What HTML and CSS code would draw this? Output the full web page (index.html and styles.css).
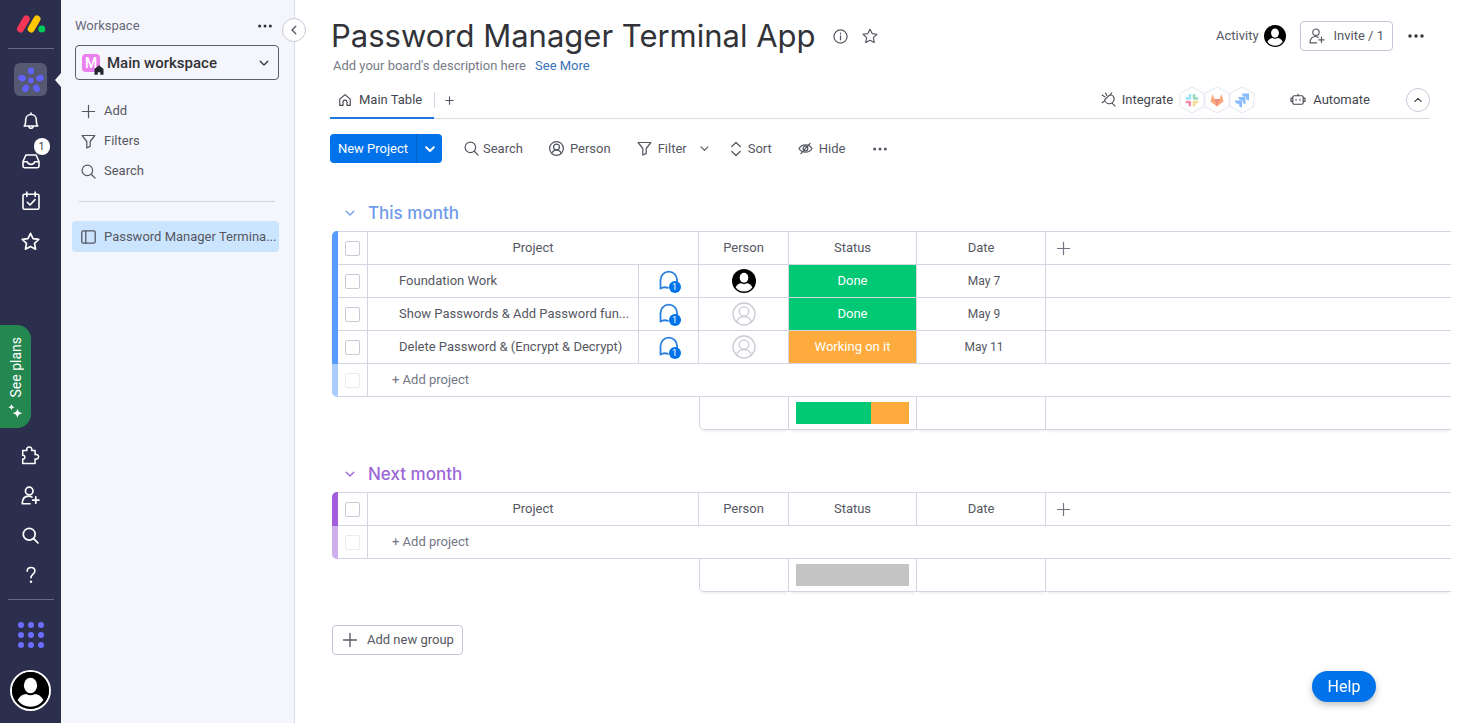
FILE: index.html
```html
<!DOCTYPE html>
<html lang="en">
<head>
<meta charset="utf-8">
<meta name="viewport" content="width=device-width, initial-scale=1">
<title>Password Manager Terminal App</title>
<link rel="stylesheet" href="styles.css">
</head>
<body>
<svg class="sprite" aria-hidden="true">
  <symbol id="i-chevron" viewBox="0 0 12 12"><path d="M2.200 4.200 6 8l3.800-3.800"/></symbol>
  <symbol id="i-plus" viewBox="0 0 16 16"><path d="M8 1.500v13M1.500 8h13"/></symbol>
  <symbol id="i-search" viewBox="0 0 16 16"><circle cx="6.800" cy="6.800" r="5.600"/><path d="m10.900 10.900 4.100 4.100"/></symbol>
  <symbol id="i-filter" viewBox="0 0 16 16"><path d="M1.200 1.600h13.600L9.800 8v5.200L6.200 15V8z"/></symbol>
  <symbol id="i-star" viewBox="0 0 18 18"><path d="m9 1.300 2.400 5 5.400.7-4 3.800 1 5.500L9 13.700l-4.800 2.600 1-5.500-4-3.800 5.400-.7z"/></symbol>
  <symbol id="i-invite" viewBox="0 0 18 18"><circle cx="7.800" cy="4.700" r="3.600"/><path d="M8.500 16.800H1.200c0-4.600 2.400-7.200 6-7.200 1.200 0 2.300.3 3.200.9M14 10.300v6M11 13.300h6"/></symbol>
  <symbol id="i-dots" viewBox="0 0 18 6"><g fill="currentColor" stroke="none"><circle cx="3" cy="3" r="1.700"/><circle cx="9" cy="3" r="1.700"/><circle cx="15" cy="3" r="1.700"/></g></symbol>
  <symbol id="i-person" viewBox="0 0 24 24"><circle cx="12" cy="12" r="11"/><circle cx="12" cy="9.500" r="4.700"/><path d="M4.500 20c1-3.300 3.800-5.300 7.500-5.300s6.500 2 7.500 5.300"/></symbol>
  <symbol id="i-avatar" viewBox="0 0 24 24"><circle cx="12" cy="12" r="12" fill="#000" stroke="none"/><ellipse cx="12" cy="8.800" rx="4.300" ry="5" fill="#fff" stroke="none"/><path d="M3.600 18.200c1.600-2.600 3.300-3.800 5.600-3.900 1.700 1.100 3.900 1.100 5.600 0 2.300.1 4 1.300 5.600 3.900A10.400 10.400 0 0 1 12 22.600a10.400 10.400 0 0 1-8.400-4.400z" fill="#fff" stroke="none"/></symbol>
  <symbol id="i-home" viewBox="0 0 16 16"><path d="M2 7 8 1.800 14 7v7.200h-3.700v-3.700a2.300 2.300 0 0 0-4.600 0v3.700H2z"/></symbol>
  <symbol id="i-chat" viewBox="0 0 22 22"><path d="M2.500 18.600V10a8.300 8.300 0 1 1 16.600 0v2.500M2.500 18.600c2.300-1.700 4.500-1.700 7.500-.8"/></symbol>
</svg>

<div class="app">
  <nav class="rail" aria-label="Main">
    <a class="rail-logo" href="#" aria-label="Home">
      <svg width="30" height="20" viewBox="0 0 30 20"><path d="m4.500 15 5.800-10" stroke="#f63655" stroke-width="7"/><path d="m15.200 15 5.800-10" stroke="#ffc800" stroke-width="7"/><circle cx="25.800" cy="15" r="3.500" fill="#00ca59" stroke="none"/></svg>
    </a>
    <a class="rail-active" href="#" aria-label="Work management">
      <svg width="26" height="26" viewBox="0 0 26 26"><g stroke="#6161ff" stroke-width="6"><path d="M13 3.500v.8M22.700 10.900l-1.500.5M18.900 22l-.9-1.300M7.100 22l.9-1.300M3.300 10.900l1.500.5"/></g><circle cx="13" cy="13.500" r="2.800" fill="#6161ff" stroke="none"/></svg>
    </a>
    <button class="rail-item" aria-label="Notifications"><svg width="18" height="18" viewBox="0 0 18 18"><path d="M2.200 14h13.600c-1.300-1.300-1.500-2.800-1.500-6.300 0-3-2.200-5.200-5.300-5.200S3.700 4.700 3.700 7.700c0 3.500-.2 5-1.500 6.300zM9 2.500V1M7 14.300a2 2 0 0 0 4 0"/></svg></button>
    <button class="rail-item" aria-label="Inbox"><svg width="20" height="18" viewBox="0 0 20 18"><path d="M2 9.500 4.900 3h10.200L18 9.500V14a1.800 1.800 0 0 1-1.800 1.800H3.800A1.800 1.800 0 0 1 2 14zM2.200 9.700h4.100c.7 3.600 6.700 3.600 7.400 0h4.100"/></svg><span class="rail-badge">1</span></button>
    <button class="rail-item" aria-label="My work"><svg width="20" height="20" viewBox="0 0 20 20"><rect x="2" y="3.200" width="16" height="15" rx="1.500"/><path d="M5.800 1v4.500M14.200 1v4.500M6.300 11.300 9 14l5-5.400"/></svg></button>
    <button class="rail-item" aria-label="Favorites"><svg width="19" height="19"><use href="#i-star"/></svg></button>
    <button class="plans">
      <span>See plans</span>
      <svg width="16" height="16" viewBox="0 0 16 16"><g fill="#fff" stroke="none"><path d="M9.500 4.500c.7 3 1.500 3.800 5 4.700-3.500.9-4.300 1.700-5 4.700-.7-3-1.500-3.800-5-4.700 3.500-.9 4.300-1.700 5-4.700z"/><path d="M3.500 0c.4 2 1 2.600 3.200 3.200-2.200.6-2.800 1.200-3.200 3.200-.4-2-1-2.600-3.200-3.200C2.500 2.600 3.100 2 3.500 0z"/></g></svg>
    </button>
    <div class="rail-bottom">
      <button class="rail-item" aria-label="Apps"><svg width="19" height="19" viewBox="0 0 20 20"><path d="M1.800 4.700h4.400c-.7-2 .5-3.700 2.500-3.700s3.200 1.700 2.500 3.700h3.600v4.500c2-.7 3.700.5 3.700 2.200s-1.700 2.900-3.700 2.200v4.700h-13v-4.600c3 .5 3-4.200 0-3.900z"/></svg></button>
      <button class="rail-item" aria-label="Invite members"><svg width="19" height="19"><use href="#i-invite"/></svg></button>
      <button class="rail-item" aria-label="Search everything"><svg width="17" height="17"><use href="#i-search"/></svg></button>
      <button class="rail-item" aria-label="Help center"><svg width="18" height="18" viewBox="0 0 18 18"><path d="M5.200 5.300C5.200 3 6.800 1.500 9 1.500s3.900 1.400 3.900 3.500c0 3.200-3.900 3-3.900 6.800"/><circle cx="9" cy="15.800" r="1.200" fill="currentColor" stroke="none"/></svg></button>
      <hr class="rail-line">
      <button class="rail-grid" aria-label="Product switcher"><svg width="28" height="28" viewBox="0 0 28 28"><g fill="#6c6cff" stroke="none"><circle cx="4" cy="4" r="3"/><circle cx="14" cy="4" r="3"/><circle cx="24" cy="4" r="3"/><circle cx="4" cy="14" r="3"/><circle cx="14" cy="14" r="3"/><circle cx="24" cy="14" r="3"/><circle cx="4" cy="24" r="3"/><circle cx="14" cy="24" r="3"/><circle cx="24" cy="24" r="3"/></g></svg></button>
      <button class="rail-avatar" aria-label="Profile"><svg width="37" height="37"><use href="#i-avatar"/></svg></button>
    </div>
  </nav>

  <aside class="side">
    <div class="side-head"><span>Workspace</span><button aria-label="Workspace options"><svg width="16" height="6"><use href="#i-dots"/></svg></button></div>
    <button class="ws">
      <span class="ws-mark">M<svg width="10" height="10" viewBox="0 0 10 10"><path d="M5 .3 9.500 4v5.700H6.300V7.200H3.700v2.500H.5V4z" fill="#24262e" stroke="none"/></svg></span>
      <span class="ws-name">Main workspace</span>
      <svg width="12" height="12"><use href="#i-chevron"/></svg>
    </button>
    <div class="side-actions">
      <button><svg width="15" height="15"><use href="#i-plus"/></svg>Add</button>
      <button><svg width="15" height="15"><use href="#i-filter"/></svg>Filters</button>
      <button><svg width="15" height="15"><use href="#i-search"/></svg>Search</button>
    </div>
    <hr class="side-line">
    <a class="side-board" href="#"><svg width="15" height="14" viewBox="0 0 15 14"><rect x=".8" y=".8" width="13.400" height="12.400" rx="1.500"/><path d="M4.800 1v12"/></svg>Password Manager Termina...</a>
    <button class="collapse" aria-label="Collapse sidebar"><svg class="turn-left" width="12" height="12"><use href="#i-chevron"/></svg></button>
    <svg class="notch" width="6" height="14" viewBox="0 0 6 14"><path d="M6 0v14L0 7z" fill="#f5f6fb" stroke="none"/></svg>
  </aside>

  <main class="main">
    <header class="head">
      <div class="title-row">
        <h1>Password Manager Terminal App</h1>
        <button aria-label="Board info"><svg width="15" height="15" viewBox="0 0 16 16"><circle cx="8" cy="8" r="7"/><path d="M8 7.200v4.300M8 4.300v1"/></svg></button>
        <button aria-label="Add to favorites"><svg width="16" height="16"><use href="#i-star"/></svg></button>
        <div class="title-actions">
          <button class="activity">Activity<svg width="22" height="22"><use href="#i-avatar"/></svg></button>
          <button class="invite"><svg width="16" height="16"><use href="#i-invite"/></svg>Invite / 1</button>
          <button aria-label="Board options"><svg width="18" height="6"><use href="#i-dots"/></svg></button>
        </div>
      </div>
      <p class="desc">Add your board's description here <a href="#">See More</a></p>
      <div class="tabs">
        <a class="tab" href="#"><svg width="14" height="14"><use href="#i-home"/></svg>Main Table</a>
        <button class="tab-add" aria-label="Add view"><svg width="9" height="9"><use href="#i-plus" stroke-width="2"/></svg></button>
        <div class="tab-actions">
          <button class="integrate"><svg width="15" height="15" viewBox="0 0 16 16"><path d="M11.800 11.800 15 15M3.800 8.300 8.500 3.800c1.700-1 3.600-.6 4.600.8 1.300 1.800 1.200 4-.2 5.800-1.400 1.900-3.700 2.600-5.800 1.900-2-.6-3-2.300-3.300-4zM1.200 3.200l3.200 2.200M6.200 3.800 4.800 1M9.500 3.300 11.500 1M3.800 9.500 1.200 11.500"/></svg>Integrate
            <span class="hexes">
              <svg width="26" height="28" viewBox="0 0 26 28"><path class="hex" d="M13 1 25 7.500v13L13 27 1 20.500v-13z"/><g stroke-width="2.600" opacity=".5"><path d="M11 9v3M7.800 12.500h3.200" stroke="#36c5f0"/><path d="M15 9v3M15.200 12.500h3" stroke="#2eb67d"/><path d="M7.800 16h3v3.200" stroke="#e01e5a"/><path d="M15 19.200V16h3.200" stroke="#ecb22e"/></g></svg>
              <svg width="26" height="28" viewBox="0 0 26 28"><path class="hex" d="M13 1 25 7.500v13L13 27 1 20.500v-13z"/><g stroke="none" opacity=".6"><path d="m13 20.500-6.500-5L8.500 8l2 5h5l2-5 2 7.500z" fill="#fc6d26"/><path d="m13 20.500-2.500-7.500h5z" fill="#e24329"/></g></svg>
              <svg width="26" height="28" viewBox="0 0 26 28"><path class="hex" d="M13 1 25 7.500v13L13 27 1 20.500v-13z"/><g fill="#2684ff" stroke="none" opacity=".55"><path d="M13 7.500h7v7c-2 0-2.800-1-2.800-2.500v-1.200H16c-2 0-3-1.300-3-3.300z"/><path d="M9.500 11h7v7c-2 0-2.800-1-2.800-2.500v-1.200h-1.200c-2 0-3-1.300-3-3.300z"/><path d="M6 14.500h7v7c-2 0-2.800-1-2.800-2.500v-1.200H9c-2 0-3-1.300-3-3.300z"/></g></svg>
            </span>
          </button>
          <button class="automate"><svg width="16" height="14" viewBox="0 0 16 14"><rect x="2.800" y="2.800" width="10.400" height="8.400" rx="1.500"/><path d="M8 2.600V1M2.600 5H1v3.500h1.600M13.400 5H15v3.500h-1.600M6 6.300v1M10 6.300v1"/></svg>Automate</button>
          <button class="round" aria-label="Collapse header"><svg class="turn-up" width="10" height="10"><use href="#i-chevron"/></svg></button>
        </div>
      </div>
      <div class="tools">
        <div class="new"><button class="new-main">New Project</button><button class="new-more" aria-label="More item types"><svg width="12" height="12"><use href="#i-chevron"/></svg></button></div>
        <button class="tool tool-search"><svg width="15" height="15"><use href="#i-search"/></svg>Search</button>
        <button class="tool"><svg width="15" height="15"><use href="#i-person" stroke-width="2"/></svg>Person</button>
        <button class="tool"><svg width="15" height="15"><use href="#i-filter"/></svg>Filter<svg class="tool-more" width="11" height="11"><use href="#i-chevron"/></svg></button>
        <button class="tool"><svg width="12" height="16" viewBox="0 0 12 16"><path d="M1.800 5.500 6 1.500l4.200 4M1.800 10.500l4.200 4 4.200-4"/></svg>Sort</button>
        <button class="tool"><svg width="15" height="13" viewBox="0 0 16 14"><path d="M1 7c3-5.300 11-5.300 14 0-3 5.300-11 5.300-14 0zM13 1.500 3 12.500"/><circle cx="8" cy="7" r="2.500"/></svg>Hide</button>
        <button class="tool" aria-label="More tools"><svg width="16" height="6"><use href="#i-dots"/></svg></button>
      </div>
    </header>

    <section class="group blue">
      <h2><button aria-label="Collapse This month"><svg width="12" height="12"><use href="#i-chevron"/></svg></button>This month</h2>
      <table class="board">
        <colgroup><col class="c-bar"><col class="c-check"><col class="c-name"><col class="c-chat"><col class="c-person"><col class="c-status"><col class="c-date"><col></colgroup>
        <thead>
          <tr><td class="bar first"></td><td class="check"><input type="checkbox" aria-label="Select all in This month"></td><th colspan="2">Project</th><th>Person</th><th>Status</th><th>Date</th><td class="add-col"><button aria-label="Add column"><svg width="15" height="15"><use href="#i-plus"/></svg></button></td></tr>
        </thead>
        <tbody>
          <tr><td class="bar"></td><td class="check"><input type="checkbox" aria-label="Select Foundation Work"></td><td class="name">Foundation Work</td><td class="mid"><button class="chat" aria-label="1 update"><svg width="22" height="22"><use href="#i-chat"/></svg><span>1</span></button></td><td class="mid"><svg width="24" height="24"><use href="#i-avatar"/></svg></td><td class="status done">Done</td><td class="date">May 7</td><td class="end"></td></tr>
          <tr><td class="bar"></td><td class="check"><input type="checkbox" aria-label="Select Show Passwords"></td><td class="name">Show Passwords &amp; Add Password fun...</td><td class="mid"><button class="chat" aria-label="1 update"><svg width="22" height="22"><use href="#i-chat"/></svg><span>1</span></button></td><td class="mid empty"><svg width="24" height="24"><use href="#i-person"/></svg></td><td class="status done">Done</td><td class="date">May 9</td><td class="end"></td></tr>
          <tr><td class="bar"></td><td class="check"><input type="checkbox" aria-label="Select Delete Password"></td><td class="name">Delete Password &amp; (Encrypt &amp; Decrypt)</td><td class="mid"><button class="chat" aria-label="1 update"><svg width="22" height="22"><use href="#i-chat"/></svg><span>1</span></button></td><td class="mid empty"><svg width="24" height="24"><use href="#i-person"/></svg></td><td class="status working">Working on it</td><td class="date">May 11</td><td class="end"></td></tr>
          <tr><td class="bar last"></td><td class="check"><input type="checkbox" disabled aria-label="Select new project"></td><td class="add" colspan="6"><button>+ Add project</button></td></tr>
        </tbody>
        <tfoot>
          <tr><td class="blank" colspan="4"></td><td class="corner"></td><td class="sum"><div class="battery"><span class="done" style="width:66.67%"></span><span class="working" style="width:33.33%"></span></div></td><td></td><td class="end"></td></tr>
        </tfoot>
      </table>
    </section>

    <section class="group purple">
      <h2><button aria-label="Collapse Next month"><svg width="12" height="12"><use href="#i-chevron"/></svg></button>Next month</h2>
      <table class="board">
        <colgroup><col class="c-bar"><col class="c-check"><col class="c-name"><col class="c-chat"><col class="c-person"><col class="c-status"><col class="c-date"><col></colgroup>
        <thead>
          <tr><td class="bar first"></td><td class="check"><input type="checkbox" aria-label="Select all in Next month"></td><th colspan="2">Project</th><th>Person</th><th>Status</th><th>Date</th><td class="add-col"><button aria-label="Add column"><svg width="15" height="15"><use href="#i-plus"/></svg></button></td></tr>
        </thead>
        <tbody>
          <tr><td class="bar last"></td><td class="check"><input type="checkbox" disabled aria-label="Select new project"></td><td class="add" colspan="6"><button>+ Add project</button></td></tr>
        </tbody>
        <tfoot>
          <tr><td class="blank" colspan="4"></td><td class="corner"></td><td class="sum"><div class="battery none"></div></td><td></td><td class="end"></td></tr>
        </tfoot>
      </table>
    </section>

    <button class="add-group"><svg width="16" height="16"><use href="#i-plus"/></svg>Add new group</button>
  </main>
  <button class="help">Help</button>
</div>
</body>
</html>
```
FILE: styles.css
```css
* { box-sizing: border-box; }

body {
  margin: 0;
  background: #fff;
  color: #555762;
  font: 13px/20px Roboto, "Open Sans", sans-serif;
}

.sprite { position: absolute; width: 0; height: 0; }

svg {
  display: block;
  flex: none;
  fill: none;
  stroke: currentColor;
  stroke-width: 1.3;
  stroke-linecap: round;
  stroke-linejoin: round;
}

button {
  display: flex;
  align-items: center;
  margin: 0;
  padding: 0;
  border: 0;
  background: none;
  color: inherit;
  font: inherit;
  white-space: nowrap;
  cursor: pointer;
}

a { color: inherit; text-decoration: none; }
hr { margin: 0; border: 0; }

.app { display: flex; min-height: 100vh; }

/* Navigation rail */
.rail {
  display: flex;
  flex: none;
  flex-direction: column;
  align-items: center;
  width: 61px;
  background: #2b2e4c;
  color: #fff;
}

.rail-logo {
  display: flex;
  align-items: center;
  justify-content: center;
  width: 46px;
  height: 49px;
  border-bottom: 1px solid #686a83;
}

.rail-active {
  display: flex;
  align-items: center;
  justify-content: center;
  width: 33px;
  height: 33px;
  margin: 14px 0 5px;
  border-radius: 6px;
  background: #565972;
}

.rail-item {
  position: relative;
  justify-content: center;
  width: 40px;
  height: 40px;
}

.rail-item svg { stroke-width: 1.6; }

.rail-badge {
  position: absolute;
  top: -3px;
  right: 1px;
  width: 16px;
  border-radius: 8px;
  background: #fff;
  color: #323338;
  font-size: 10px;
  line-height: 17px;
  text-align: center;
}

.plans {
  flex-direction: column;
  justify-content: space-between;
  align-self: flex-start;
  width: 31px;
  height: 103px;
  margin-top: 64px;
  padding: 12px 0 8px;
  border-radius: 0 14px 14px 0;
  background: #258750;
  font-size: 14px;
}

.plans span { writing-mode: vertical-rl; transform: rotate(180deg); }

.rail-bottom {
  display: flex;
  flex-direction: column;
  align-items: center;
  margin-top: auto;
  padding-bottom: 12px;
}

.rail-line { width: 46px; height: 1px; margin-top: 4px; background: #686a83; }
.rail-grid { margin: 21px 0; }

.rail-avatar {
  border: 2px solid #fff;
  border-radius: 50%;
}

/* Workspace sidebar */
.side {
  position: relative;
  flex: none;
  width: 234px;
  padding: 16px 15px 0 11px;
  border-right: 1px solid #d8dae5;
  background: #f5f6fb;
}

.side-head {
  display: flex;
  justify-content: space-between;
  padding: 0 6px 0 3px;
  color: #676879;
}

.side-head button { color: #323338; }

.ws {
  gap: 4px;
  width: calc(100% - 3px);
  height: 35px;
  margin: 9px 0 16px 3px;
  padding: 0 8px 0 6px;
  border: 1px solid #5c5f6a;
  border-radius: 4px;
  color: #323338;
  font-size: 15px;
  font-weight: 500;
}

.ws-mark {
  position: relative;
  width: 18px;
  margin-right: 3px;
  border-radius: 4px;
  background: #ea80ee;
  color: #fff;
  font-size: 14px;
  line-height: 18px;
  text-align: center;
}

.ws-mark svg { position: absolute; right: -4px; bottom: -3px; }
.ws-name { flex: 1; text-align: left; }

.side-actions button {
  gap: 8px;
  height: 30px;
  padding-left: 9px;
}

.side-line { height: 1px; margin: 15px 4px 19px 7px; background: #d0d4e0; }

.side-board {
  display: flex;
  align-items: center;
  gap: 8px;
  height: 31px;
  padding-left: 9px;
  border-radius: 4px;
  background: #cce5ff;
  white-space: nowrap;
}

.collapse {
  position: absolute;
  top: 18px;
  right: -12px;
  z-index: 1;
  justify-content: center;
  width: 24px;
  height: 24px;
  border: 1px solid #c8cbd8;
  border-radius: 50%;
  background: #fff;
}

.turn-left { transform: rotate(90deg); }
.turn-up { transform: rotate(180deg); }
.notch { position: absolute; top: 73px; left: -6px; }

/* Board header */
.main {
  flex: 1;
  min-width: 0;
  padding: 16px 17px 68px 37px;
}

.head { padding-right: 21px; margin-left: -2px; }

.title-row { display: flex; align-items: center; gap: 14px; height: 40px; }

h1 {
  margin: 0 3px 0 1px;
  color: #323338;
  font: 400 31px/40px Inter, sans-serif;
  white-space: nowrap;
}

.title-actions {
  display: flex;
  align-items: center;
  gap: 14px;
  margin-left: auto;
  padding-right: 5px;
  color: #323338;
}

.activity { gap: 5px; color: #555762; }

.invite {
  gap: 9px;
  height: 30px;
  padding: 0 8px;
  border: 1px solid #c3c6d4;
  border-radius: 4px;
  color: #555762;
}

.desc { margin: 0 0 0 3px; color: #787a88; }
.desc a { margin-left: 6px; color: #3a72b8; }

.tabs { display: flex; height: 43px; border-bottom: 1px solid #d8dae5; }

.tab {
  display: flex;
  align-items: center;
  gap: 7px;
  height: 43px;
  padding: 6px 12px 0 8px;
  border-bottom: 2px solid #1f76dc;
  color: #44464f;
}

.tab-add { height: 16px; margin-top: 16px; padding-left: 10px; border-left: 1px solid #d0d4e4; }

.tab-actions { display: flex; align-items: center; margin-left: auto; padding-top: 5px; }
.tab-actions button { color: #44464f; }
.integrate { gap: 6px; }
.hexes { display: flex; }
.hexes svg { margin-right: -1px; }
.hex { stroke: #e9ebf3; stroke-width: 1.2; }
.integrate > svg, .automate svg { stroke-width: 1.1; }
.automate { gap: 7px; margin: 0 36px; }

.round {
  justify-content: center;
  width: 24px;
  height: 24px;
  border: 1px solid #c8cbd8;
  border-radius: 50%;
}

.tools { display: flex; align-items: center; gap: 26px; margin-top: 15px; }

.new {
  display: flex;
  height: 29px;
  border-radius: 4px;
  background: #0073ea;
  color: #fff;
}

.new button { justify-content: center; }
.new-main { width: 86px; }
.new-more { width: 26px; border-left: 1px solid #0060c6; }
.new-more svg { stroke-width: 2; }

.tool { gap: 6px; }
.tool:first-of-type { margin-left: -4px; }
.tool-search { gap: 4px; }
.tool-more { margin-left: 6px; margin-right: -6px; }

/* Groups */
.group { --edge: #d3d6e2; }
.blue { --tone: #579bfc; --tone-soft: #abcdfd; --title: #6f9bea; }
.purple { --tone: #a25ddc; --tone-soft: #d0aeed; --title: #9b68d6; }

h2 {
  display: flex;
  align-items: center;
  gap: 12px;
  height: 36px;
  margin: 32px 0 0;
  padding: 0 0 0 12px;
  color: var(--title);
  font: 500 17px/36px Inter, sans-serif;
}

.purple h2 { margin-top: 26px; }

.board {
  width: 100%;
  border-spacing: 0;
  table-layout: fixed;
}

.c-bar { width: 6px; }
.c-check { width: 30px; }
.c-name { width: 271px; }
.c-chat { width: 60px; }
.c-person { width: 90px; }
.c-status { width: 128px; }
.c-date { width: 129px; }

.board td, .board th {
  height: 33px;
  padding: 0;
  border: 0 solid var(--edge);
  border-width: 0 1px 1px 0;
  font-weight: 400;
  white-space: nowrap;
}

.board thead td, .board thead th { height: 34px; border-top-width: 1px; }
.board td.bar { border: 0; background: var(--tone); }
.board .first { border-top-left-radius: 5px; }
.board td.last { border-bottom-left-radius: 5px; background: var(--tone-soft); }
.board td.end, .board td.add, .board td.add-col { border-right-width: 0; }
.board td.blank { border: 0; }
.board td.corner { border-left-width: 1px; border-bottom-left-radius: 5px; }
.board tfoot td { box-shadow: 0 3px 3px -2px rgb(40 44 70 / 10%); }
.board tfoot td.blank { box-shadow: none; }

.check input {
  display: block;
  width: 15px;
  height: 15px;
  margin: 0 auto;
  border: 1px solid #c8cad6;
  border-radius: 2px;
  appearance: none;
}

.check input:disabled { border-color: #e9ebf1; }

.board td.name { padding-left: 31px; }
.mid > svg, .mid > button { margin: 0 auto; }
.empty { color: #c9cbd6; }
.board .status, .date { text-align: center; }
.board td.date { padding-left: 6px; font-size: 12px; }
.board .status { color: #fff; }
.board .done { background: #00c875; }
.board .working { background: #fdab3d; }
.add button { padding-left: 24px; color: #747685; }
.add-col button { margin-left: 10px; color: #747685; }

.chat { position: relative; color: #2b80de; }
.chat svg { stroke-width: 1.8; }

.chat span {
  position: absolute;
  right: -1px;
  bottom: -1px;
  width: 12px;
  border-radius: 6px;
  background: #0073ea;
  color: #fff;
  font-size: 9px;
  line-height: 12px;
  text-align: center;
}

.board .sum { padding: 0 7px; }
.battery { display: flex; height: 22px; }
.none { background: #c4c4c4; }

.add-group {
  gap: 9px;
  height: 30px;
  margin-top: 33px;
  padding: 0 8px 0 9px;
  border: 1px solid #c3c6d4;
  border-radius: 4px;
}

.help {
  position: fixed;
  right: 92px;
  bottom: 21px;
  justify-content: center;
  width: 64px;
  height: 31px;
  border-radius: 16px;
  background: #0073ea;
  box-shadow: 0 3px 7px rgb(0 0 0 / 25%);
  color: #fff;
  font-size: 16px;
}
```
